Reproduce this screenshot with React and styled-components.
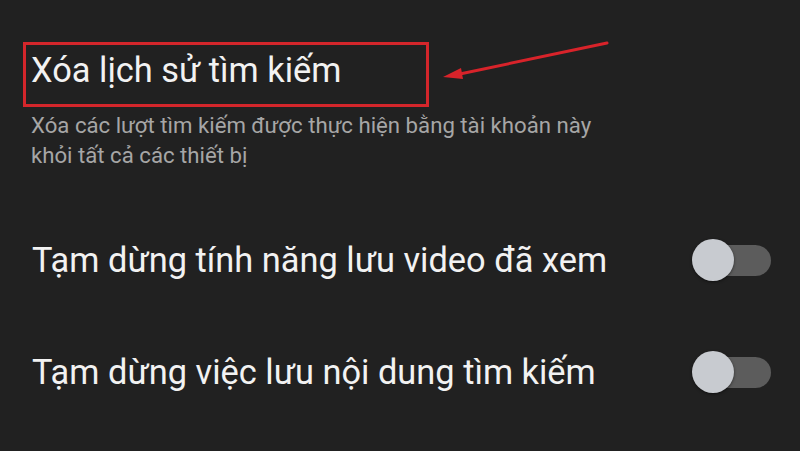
import styled, { createGlobalStyle } from "styled-components";

const GlobalStyle = createGlobalStyle`
    html, body {
        margin: 0;
        padding: 0;
        background: #212121;
    }
    body {
        font-family: Roboto, "Noto Sans", "Liberation Sans", sans-serif;
    }
`;

export default function App() {
    return (
        <>
            <GlobalStyle />
            <Page>
                <Section>
                    <HighlightBox>
                        <Title>Xóa lịch sử tìm kiếm</Title>
                    </HighlightBox>
                    <Arrow width="170" height="44" viewBox="0 0 170 44">
                        <line x1="166" y1="2" x2="14" y2="34" stroke="#d8232a" strokeWidth="3" strokeLinecap="round" />
                        <polygon points="2,36 20,27 22,38" fill="#d8232a" />
                    </Arrow>
                    <Subtitle>
                        Xóa các lượt tìm kiếm được thực hiện bằng tài khoản này khỏi tất cả các thiết bị
                    </Subtitle>
                </Section>
                <Row $first>
                    <RowLabel>Tạm dừng tính năng lưu video đã xem</RowLabel>
                    <Switch>
                        <Track />
                        <Thumb />
                    </Switch>
                </Row>
                <Row>
                    <RowLabel>Tạm dừng việc lưu nội dung tìm kiếm</RowLabel>
                    <Switch>
                        <Track />
                        <Thumb />
                    </Switch>
                </Row>
            </Page>
        </>
    );
}

const Page = styled.div`
    width: 800px;
    height: 451px;
    overflow: hidden;
    background: #212121;
    padding-top: 42px;
    box-sizing: border-box;
`;

const Section = styled.div`
    position: relative;
`;

const HighlightBox = styled.div`
    margin-left: 23px;
    width: 406px;
    height: 65px;
    box-sizing: border-box;
    border: 3px solid #d4262b;
    padding: 8px 0 0 5px;
    display: flex;
    align-items: flex-start;
`;

const Title = styled.div`
    font-size: 34.4px;
    line-height: 34px;
    color: #f2f2f2;
    white-space: nowrap;
`;

const Arrow = styled.svg`
    position: absolute;
    left: 441px;
    top: -1px;
`;

const Subtitle = styled.div`
    margin: 3px 0 0 31px;
    max-width: 590px;
    font-size: 22.2px;
    line-height: 30px;
    color: #a6a6a6;
`;

const Row = styled.div`
    display: flex;
    align-items: center;
    justify-content: space-between;
    height: 112px;
    margin-top: ${(p) => (p.$first ? "34px" : "0")};
    padding: 0 29px 0 32px;
`;

const RowLabel = styled.div`
    font-size: 34.4px;
    color: #f2f2f2;
    white-space: nowrap;
`;

const Switch = styled.div`
    position: relative;
    width: 79px;
    height: 42px;
    flex-shrink: 0;
`;

const Track = styled.div`
    position: absolute;
    right: 0;
    top: 6px;
    width: 66px;
    height: 31px;
    border-radius: 16px;
    background: #5c5c5c;
`;

const Thumb = styled.div`
    position: absolute;
    left: 0;
    top: 0;
    width: 42px;
    height: 42px;
    border-radius: 50%;
    background: #c8cbd0;
    box-shadow: 0 1px 3px rgba(0, 0, 0, 0.5);
`;
